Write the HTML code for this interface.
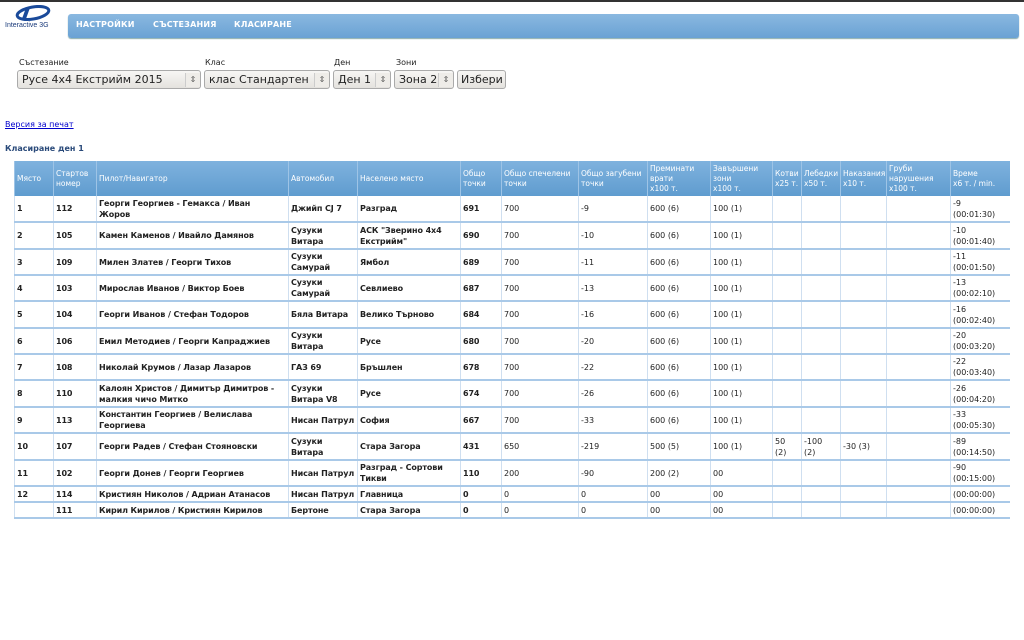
<!DOCTYPE html>
<html><head><meta charset="utf-8"><style>
body{margin:0;width:1024px;height:640px;background:#fff;font-family:"DejaVu Sans","Liberation Sans",sans-serif;position:relative;overflow:hidden}
.topline{position:absolute;left:0;top:0;width:1024px;height:2px;background:#333}
.logo{position:absolute;left:5px;top:5px;width:55px;height:24px}
.nav{position:absolute;left:68px;top:14px;width:951px;height:24px;border-radius:3px;background:linear-gradient(#8ab8e0,#6aa2d4);box-shadow:0 1px 1px #8aa}
.nav span{position:absolute;top:6px;color:#fff;font-weight:bold;font-size:8px;letter-spacing:0.2px}
.lbl{position:absolute;top:58px;font-size:8px;color:#222}
.sel{position:absolute;top:70px;height:19px;border:1px solid #aaa;border-radius:3px;background:linear-gradient(#f7f6f4,#e4e2de);font-size:11px;line-height:18px;padding-left:4px;box-sizing:border-box;color:#222;overflow:hidden;white-space:nowrap}
.sel i{position:absolute;right:0;top:2px;width:14px;height:14px;border-left:1px solid #ccc;font-style:normal;font-size:8px;text-align:center;line-height:14px;color:#555;background:#eeece8}
a{position:absolute;left:5px;top:120px;font-size:8px;color:#00c}
.h{position:absolute;left:5px;top:144px;font-size:8px;font-weight:bold;color:#2a4a7a}
table{position:absolute;left:14px;top:161px;border-collapse:collapse;width:995px;table-layout:fixed;font-size:8px;color:#222}
th{background:linear-gradient(#7fb2de,#5f9ccf);color:#fff;font-weight:normal;text-align:left;vertical-align:middle;height:35px;padding:0 2px;font-size:7.5px;border-left:1px solid #9ec4e6;line-height:10px}
td{border-bottom:2px solid #a9c9e8;border-left:1px solid #cfdff0;padding:0 2px;line-height:11px;vertical-align:middle}
td.b{font-weight:bold;letter-spacing:-0.1px}
</style></head><body>
<div class="topline"></div>
<svg class="logo" viewBox="0 0 55 24"><ellipse cx="28" cy="8" rx="16" ry="6" fill="none" stroke="#1a4a9a" stroke-width="3" transform="rotate(-10 28 8)"/><rect x="22" y="2" width="4" height="12" fill="#1a4a9a" transform="skewX(-20)"/><text x="0" y="22" font-size="7" fill="#1a3a7a" font-family="Liberation Sans">Interactive 3G</text></svg>
<div class="nav"><span style="left:8px">НАСТРОЙКИ</span><span style="left:85px">СЪСТЕЗАНИЯ</span><span style="left:166px">КЛАСИРАНЕ</span></div>
<div class="lbl" style="left:19px">Състезание</div><div class="lbl" style="left:205px">Клас</div><div class="lbl" style="left:334px">Ден</div><div class="lbl" style="left:396px">Зони</div>
<div class="sel" style="left:17px;width:184px">Русе 4x4 Екстрийм 2015<i>⇕</i></div>
<div class="sel" style="left:204px;width:126px">клас Стандартен<i>⇕</i></div>
<div class="sel" style="left:333px;width:58px">Ден 1<i>⇕</i></div>
<div class="sel" style="left:394px;width:60px">Зона 2<i>⇕</i></div>
<div class="sel" style="left:457px;width:49px;padding-left:3px">Избери</div>
<a href="#">Версия за печат</a>
<div class="h">Класиране ден 1</div>
<table>
<colgroup><col style="width:39px"><col style="width:43px"><col style="width:192px"><col style="width:69px"><col style="width:103px"><col style="width:41px"><col style="width:77px"><col style="width:69px"><col style="width:63px"><col style="width:62px"><col style="width:29px"><col style="width:39px"><col style="width:46px"><col style="width:64px"><col style="width:59px"></colgroup>
<tr><th>Място</th><th>Стартов номер</th><th>Пилот/Навигатор</th><th>Автомобил</th><th>Населено място</th><th>Общо точки</th><th>Общо спечелени точки</th><th>Общо загубени точки</th><th>Преминати врати<br>x100 т.</th><th>Завършени зони<br>x100 т.</th><th>Котви x25 т.</th><th>Лебедки x50 т.</th><th>Наказания x10 т.</th><th>Груби нарушения x100 т.</th><th>Време<br>x6 т. / min.</th></tr>
<tr style="height:26px"><td class="b">1</td><td class="b">112</td><td class="b">Георги Георгиев - Гемакса / Иван<br>Жоров</td><td class="b">Джийп CJ 7</td><td class="b">Разград</td><td class="b">691</td><td>700</td><td>-9</td><td>600 (6)</td><td>100 (1)</td><td></td><td></td><td></td><td></td><td>-9<br>(00:01:30)</td></tr>
<tr style="height:27px"><td class="b">2</td><td class="b">105</td><td class="b">Камен Каменов / Ивайло Дамянов</td><td class="b">Сузуки Витара</td><td class="b">АСК "Зверино 4x4 Екстрийм"</td><td class="b">690</td><td>700</td><td>-10</td><td>600 (6)</td><td>100 (1)</td><td></td><td></td><td></td><td></td><td>-10<br>(00:01:40)</td></tr>
<tr style="height:26px"><td class="b">3</td><td class="b">109</td><td class="b">Милен Златев / Георги Тихов</td><td class="b">Сузуки Самурай</td><td class="b">Ямбол</td><td class="b">689</td><td>700</td><td>-11</td><td>600 (6)</td><td>100 (1)</td><td></td><td></td><td></td><td></td><td>-11<br>(00:01:50)</td></tr>
<tr style="height:26px"><td class="b">4</td><td class="b">103</td><td class="b">Мирослав Иванов / Виктор Боев</td><td class="b">Сузуки Самурай</td><td class="b">Севлиево</td><td class="b">687</td><td>700</td><td>-13</td><td>600 (6)</td><td>100 (1)</td><td></td><td></td><td></td><td></td><td>-13<br>(00:02:10)</td></tr>
<tr style="height:27px"><td class="b">5</td><td class="b">104</td><td class="b">Георги Иванов / Стефан Тодоров</td><td class="b">Бяла Витара</td><td class="b">Велико Търново</td><td class="b">684</td><td>700</td><td>-16</td><td>600 (6)</td><td>100 (1)</td><td></td><td></td><td></td><td></td><td>-16<br>(00:02:40)</td></tr>
<tr style="height:26px"><td class="b">6</td><td class="b">106</td><td class="b">Емил Методиев / Георги Капраджиев</td><td class="b">Сузуки Витара</td><td class="b">Русе</td><td class="b">680</td><td>700</td><td>-20</td><td>600 (6)</td><td>100 (1)</td><td></td><td></td><td></td><td></td><td>-20<br>(00:03:20)</td></tr>
<tr style="height:26px"><td class="b">7</td><td class="b">108</td><td class="b">Николай Крумов / Лазар Лазаров</td><td class="b">ГАЗ 69</td><td class="b">Бръшлен</td><td class="b">678</td><td>700</td><td>-22</td><td>600 (6)</td><td>100 (1)</td><td></td><td></td><td></td><td></td><td>-22<br>(00:03:40)</td></tr>
<tr style="height:27px"><td class="b">8</td><td class="b">110</td><td class="b">Калоян Христов / Димитър Димитров - малкия чичо Митко</td><td class="b">Сузуки Витара V8</td><td class="b">Русе</td><td class="b">674</td><td>700</td><td>-26</td><td>600 (6)</td><td>100 (1)</td><td></td><td></td><td></td><td></td><td>-26<br>(00:04:20)</td></tr>
<tr style="height:26px"><td class="b">9</td><td class="b">113</td><td class="b">Константин Георгиев / Велислава Георгиева</td><td class="b" style="white-space:nowrap">Нисан Патрул</td><td class="b">София</td><td class="b">667</td><td>700</td><td>-33</td><td>600 (6)</td><td>100 (1)</td><td></td><td></td><td></td><td></td><td>-33<br>(00:05:30)</td></tr>
<tr style="height:27px"><td class="b">10</td><td class="b">107</td><td class="b">Георги Радев / Стефан Стояновски</td><td class="b">Сузуки Витара</td><td class="b">Стара Загора</td><td class="b">431</td><td>650</td><td>-219</td><td>500 (5)</td><td>100 (1)</td><td>50<br>(2)</td><td>-100<br>(2)</td><td>-30 (3)</td><td></td><td>-89<br>(00:14:50)</td></tr>
<tr style="height:26px"><td class="b">11</td><td class="b">102</td><td class="b">Георги Донев / Георги Георгиев</td><td class="b" style="white-space:nowrap">Нисан Патрул</td><td class="b">Разград - Сортови Тикви</td><td class="b">110</td><td>200</td><td>-90</td><td>200 (2)</td><td>00</td><td></td><td></td><td></td><td></td><td>-90<br>(00:15:00)</td></tr>
<tr style="height:16px"><td class="b">12</td><td class="b">114</td><td class="b">Кристиян Николов / Адриан Атанасов</td><td class="b" style="white-space:nowrap">Нисан Патрул</td><td class="b">Главница</td><td class="b">0</td><td>0</td><td>0</td><td>00</td><td>00</td><td></td><td></td><td></td><td></td><td>(00:00:00)</td></tr>
<tr style="height:16px"><td class="b"></td><td class="b">111</td><td class="b">Кирил Кирилов / Кристиян Кирилов</td><td class="b">Бертоне</td><td class="b">Стара Загора</td><td class="b">0</td><td>0</td><td>0</td><td>00</td><td>00</td><td></td><td></td><td></td><td></td><td>(00:00:00)</td></tr>
</table>
</body></html>
